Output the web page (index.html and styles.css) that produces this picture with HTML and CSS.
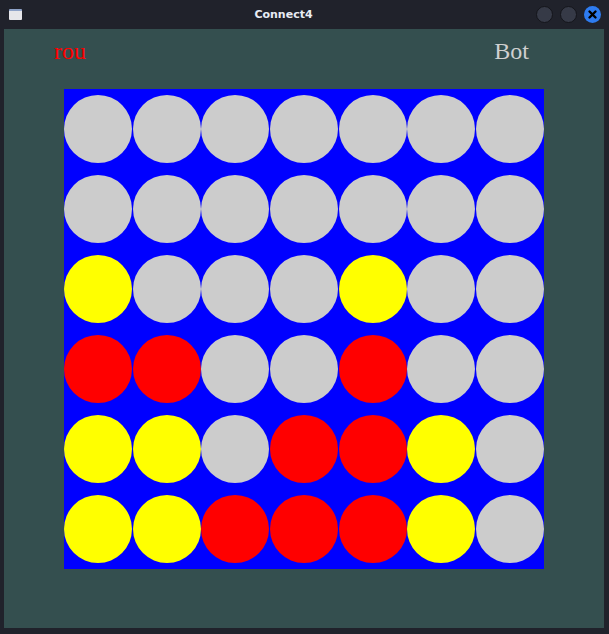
FILE: index.html
```html
<!DOCTYPE html>
<html>
<head>
<meta charset="utf-8">
<link rel="stylesheet" href="styles.css">
</head>
<body>
<div class="window">
  <div class="titlebar">
    <div class="app-icon"></div>
    <div class="title">Connect4</div>
    <div class="controls">
      <span class="btn"></span>
      <span class="btn"></span>
      <span class="btn close">
        <svg width="17" height="17" viewBox="0 0 17 17"><path d="M5.5 5.5 L11.5 11.5 M11.5 5.5 L5.5 11.5" stroke="#000" stroke-width="2.4" stroke-linecap="round"/></svg>
      </span>
    </div>
  </div>
  <div class="content">
    <div class="labels">
      <span class="label you">rou</span>
      <span class="label bot">Bot</span>
    </div>
    <div class="board">
      <span class="cell g"></span><span class="cell g"></span><span class="cell g"></span><span class="cell g"></span><span class="cell g"></span><span class="cell g"></span><span class="cell g"></span>
      <span class="cell g"></span><span class="cell g"></span><span class="cell g"></span><span class="cell g"></span><span class="cell g"></span><span class="cell g"></span><span class="cell g"></span>
      <span class="cell y"></span><span class="cell g"></span><span class="cell g"></span><span class="cell g"></span><span class="cell y"></span><span class="cell g"></span><span class="cell g"></span>
      <span class="cell r"></span><span class="cell r"></span><span class="cell g"></span><span class="cell g"></span><span class="cell r"></span><span class="cell g"></span><span class="cell g"></span>
      <span class="cell y"></span><span class="cell y"></span><span class="cell g"></span><span class="cell r"></span><span class="cell r"></span><span class="cell y"></span><span class="cell g"></span>
      <span class="cell y"></span><span class="cell y"></span><span class="cell r"></span><span class="cell r"></span><span class="cell r"></span><span class="cell y"></span><span class="cell g"></span>
    </div>
  </div>
</div>
</body>
</html>
```
FILE: styles.css
```css
html, body {
  margin: 0;
  padding: 0;
  background: #20222b;
}
.window {
  width: 609px;
  height: 634px;
  display: flex;
  flex-direction: column;
  background: #20222b;
}
.titlebar {
  height: 29px;
  display: flex;
  align-items: center;
  position: relative;
  flex: none;
}
.app-icon {
  width: 13px;
  height: 11px;
  margin-left: 9px;
  border-top: 2px solid #8fa3c8;
  box-sizing: border-box;
  background: #e6e6ea;
  border-radius: 1px;
}
.title {
  position: absolute;
  left: 0;
  right: 42px;
  text-align: center;
  font-family: "DejaVu Sans", sans-serif;
  font-weight: bold;
  font-size: 11px;
  color: #e8ecf4;
  top: 8px;
}
.controls {
  margin-left: auto;
  margin-right: 8px;
  display: flex;
  gap: 7px;
}
.btn {
  width: 17px;
  height: 17px;
  border-radius: 50%;
  background: #363a47;
  box-sizing: border-box;
  border: 1px solid #14151b;
  display: block;
}
.btn.close {
  background: #2e7cf0;
  border: none;
}
.btn.close svg { display: block; }
.content {
  flex: none;
  margin: 0 5px 0 4px;
  height: 599px;
  background: #344f4f;
  display: flex;
  flex-direction: column;
}
.labels {
  height: 60px;
  box-sizing: border-box;
  padding: 8px 75px 0 50px;
  display: flex;
  justify-content: space-between;
  font-family: "Liberation Serif", serif;
  font-size: 24px;
  line-height: 28px;
}
.you { color: #ff0000; }
.bot { color: #d0d0d0; }
.board {
  margin-left: 60px;
  width: 480px;
  height: 480px;
  background: #0000ff;
  display: grid;
  grid-template-columns: repeat(7, 1fr);
  grid-template-rows: repeat(6, 80px);
  place-items: center;
}
.cell {
  width: 68px;
  height: 68px;
  border-radius: 50%;
  display: block;
}
.g { background: #cccccc; }
.y { background: #ffff00; }
.r { background: #ff0000; }
```
